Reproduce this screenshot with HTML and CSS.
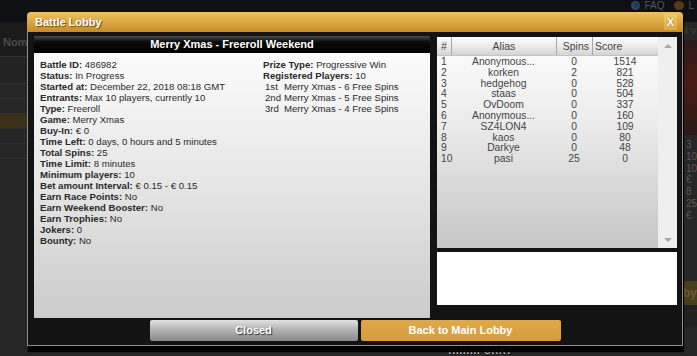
FILE: index.html
```html
<!DOCTYPE html>
<html lang="en">
     <head>
          <meta http-equiv="Content-type" content="text/html; charset=utf-8">
          <title>Battle Lobby</title>
          <link rel="stylesheet" href="styles.css">
     </head>
     <body>
          <div class="page">
               <div class="top-bar">
                    <span class="help-icon">?</span>
                    <span class="top-link">FAQ</span>
                    <span class="user-icon"></span>
                    <span class="top-link">L</span>
               </div>
               <div class="page-content">
                    <div class="left-col">
                         <div class="nav-bar">Nom</div>
                         <div class="list-head"></div>
                         <div class="list-row"></div>
                         <div class="list-row"></div>
                         <div class="list-row active"></div>
                         <div class="list-row"></div>
                         <div class="list-row"></div>
                    </div>
                    <div class="main-col">
                         <div class="footer-text">HIIIIIII CHAT</div>
                    </div>
                    <div class="right-col">
                         <div class="side-title">ll V</div>
                         <div class="promo"></div>
                         <div class="side-stats">
                              <div>3</div>
                              <div>10</div>
                              <div>10</div>
                              <div>€</div>
                              <div>8</div>
                              <div>25</div>
                              <div>€</div>
                         </div>
                         <div class="side-tab">by</div>
                         <div class="side-bar"></div>
                    </div>
               </div>
          </div>

          <div class="dialog">
               <div class="dialog-title">
                    <span class="title-text">Battle Lobby</span>
                    <span class="close-btn">X</span>
               </div>
               <div class="dialog-body">
                    <div class="panels">
                         <div class="info-panel">
                              <div class="panel-head">Merry Xmas - Freeroll Weekend</div>
                              <div class="panel-body">
                                   <div class="info">
                                        <div><b>Battle ID:</b> 486982</div>
                                        <div><b>Status:</b> In Progress</div>
                                        <div><b>Started at:</b> December 22, 2018 08:18 GMT</div>
                                        <div><b>Entrants:</b> Max 10 players, currently 10</div>
                                        <div><b>Type:</b> Freeroll</div>
                                        <div><b>Game:</b> Merry Xmas</div>
                                        <div><b>Buy-In:</b> € 0</div>
                                        <div><b>Time Left:</b> 0 days, 0 hours and 5 minutes</div>
                                        <div><b>Total Spins:</b> 25</div>
                                        <div><b>Time Limit:</b> 8 minutes</div>
                                        <div><b>Minimum players:</b> 10</div>
                                        <div><b>Bet amount Interval:</b> € 0.15 - € 0.15</div>
                                        <div><b>Earn Race Points:</b> No</div>
                                        <div><b>Earn Weekend Booster:</b> No</div>
                                        <div><b>Earn Trophies:</b> No</div>
                                        <div><b>Jokers:</b> 0</div>
                                        <div><b>Bounty:</b> No</div>
                                   </div>
                                   <div class="prizes">
                                        <div><b>Prize Type:</b> Progressive Win</div>
                                        <div><b>Registered Players:</b> 10</div>
                                        <div class="prize"><span class="place">1st</span>Merry Xmas - 6 Free Spins</div>
                                        <div class="prize"><span class="place">2nd</span>Merry Xmas - 5 Free Spins</div>
                                        <div class="prize"><span class="place">3rd</span>Merry Xmas - 4 Free Spins</div>
                                   </div>
                              </div>
                         </div>
                         <div class="side-panel">
                              <div class="standings">
                                   <div class="grid">
                                        <div class="grid-head">
                                             <div class="c-pos">#</div>
                                             <div class="c-alias">Alias</div>
                                             <div class="c-spins">Spins</div>
                                             <div class="c-score">Score</div>
                                        </div>
                                        <div class="grid-rows">
                                             <div class="grid-row"><div class="c-pos">1</div><div class="c-alias">Anonymous...</div><div class="c-spins">0</div><div class="c-score">1514</div></div>
                                             <div class="grid-row"><div class="c-pos">2</div><div class="c-alias">korken</div><div class="c-spins">2</div><div class="c-score">821</div></div>
                                             <div class="grid-row"><div class="c-pos">3</div><div class="c-alias">hedgehog</div><div class="c-spins">0</div><div class="c-score">528</div></div>
                                             <div class="grid-row"><div class="c-pos">4</div><div class="c-alias">staas</div><div class="c-spins">0</div><div class="c-score">504</div></div>
                                             <div class="grid-row"><div class="c-pos">5</div><div class="c-alias">OvDoom</div><div class="c-spins">0</div><div class="c-score">337</div></div>
                                             <div class="grid-row"><div class="c-pos">6</div><div class="c-alias">Anonymous...</div><div class="c-spins">0</div><div class="c-score">160</div></div>
                                             <div class="grid-row"><div class="c-pos">7</div><div class="c-alias">SZ4LON4</div><div class="c-spins">0</div><div class="c-score">109</div></div>
                                             <div class="grid-row"><div class="c-pos">8</div><div class="c-alias">kaos</div><div class="c-spins">0</div><div class="c-score">80</div></div>
                                             <div class="grid-row"><div class="c-pos">9</div><div class="c-alias">Darkye</div><div class="c-spins">0</div><div class="c-score">48</div></div>
                                             <div class="grid-row"><div class="c-pos">10</div><div class="c-alias">pasi</div><div class="c-spins">25</div><div class="c-score">0</div></div>
                                        </div>
                                   </div>
                                   <div class="scrollbar">
                                        <span class="arrow-up"></span>
                                        <span class="arrow-down"></span>
                                   </div>
                              </div>
                              <div class="chat-box"></div>
                         </div>
                    </div>
                    <div class="actions">
                         <div class="btn btn-closed">Closed</div>
                         <div class="btn btn-back">Back to Main Lobby</div>
                    </div>
               </div>
          </div>
     </body>
</html>
```

FILE: styles.css
```css
html{
     height: 100%;
}
body{
     margin: 0;
     padding: 0;
     height: 100%;
     overflow: hidden;
     background-color: #262626;
     font-family: "Liberation Sans", Arial, sans-serif;
}
b{
     font-weight: bold;
}

/* page behind the dialog */
.page{
     height: 356px;
     display: flex;
     flex-direction: column;
}
.top-bar{
     height: 22px;
     background-color: #0f1013;
     display: flex;
     justify-content: flex-end;
     align-items: flex-start;
     gap: 4px;
     padding-right: 3px;
     font-size: 10px;
     line-height: 11px;
     color: #4c5566;
}
.help-icon{
     width: 9px;
     height: 9px;
     border-radius: 50%;
     background-color: #2c4566;
     color: #0f1013;
     font-size: 8px;
     line-height: 9px;
     text-align: center;
     margin-top: 1px;
}
.user-icon{
     width: 10px;
     height: 9px;
     border-radius: 50%;
     background-color: #5a3a14;
     margin: 1px 0 0 6px;
}
.page-content{
     flex: 1;
     display: flex;
}
.left-col{
     width: 40px;
     display: flex;
     flex-direction: column;
}
.nav-bar{
     height: 34px;
     background-color: #1b1b1b;
     border-bottom: 1px solid #333;
     color: #4a4a4a;
     font-size: 11px;
     font-weight: bold;
     line-height: 40px;
     padding-left: 3px;
}
.list-head{
     height: 26px;
     background-color: #222;
     border-bottom: 1px solid #303030;
}
.list-row{
     height: 14px;
     border-bottom: 1px solid #2f2f2f;
}
.list-row.active{
     background-color: #3b3019;
}
.main-col{
     flex: 1;
     display: flex;
     flex-direction: column;
     justify-content: flex-end;
     align-items: center;
}
.footer-text{
     color: #bbb;
     font-size: 9px;
     line-height: 9px;
     font-weight: bold;
     margin: 0 0 0 260px;
     letter-spacing: 1px;
}
.right-col{
     width: 36px;
     display: flex;
     flex-direction: column;
     font-size: 10px;
     color: #5a5a5a;
}
.side-title{
     height: 18px;
     line-height: 18px;
     padding-left: 22px;
     color: #3c3c3c;
     font-weight: bold;
     font-size: 9px;
     white-space: nowrap;
}
.promo{
     height: 95px;
     background: linear-gradient(160deg, #241b1a, #4a1b15 50%, #2a1a18);
}
.side-stats{
     height: 140px;
     padding: 4px 0 0 25px;
     line-height: 11.8px;
}
.side-tab{
     height: 24px;
     margin-top: 2px;
     background-color: #4a3d1e;
     color: #6b5a33;
     font-weight: bold;
     font-size: 12px;
     line-height: 24px;
     padding-left: 22px;
}
.side-bar{
     height: 22px;
     background-color: #202020;
}

/* dialog */
.dialog{
     position: absolute;
     left: 27px;
     top: 12px;
     width: 656px;
     box-shadow: 1px 6px 1px rgba(0, 0, 0, 0.95);
}
.dialog-title{
     height: 20px;
     border-radius: 4px 4px 0 0;
     background: linear-gradient(#ebc45f, #d9a43e 55%, #c58c26);
     display: flex;
     justify-content: space-between;
     align-items: center;
     padding: 0 6px 0 8px;
}
.title-text{
     color: #fff;
     font-size: 11px;
     font-weight: bold;
     text-shadow: 1px 1px 1px #6a4a10;
}
.close-btn{
     width: 13px;
     height: 16px;
     background: linear-gradient(#f3cd6a, #dcaa45);
     color: #fff;
     font-size: 11px;
     font-weight: bold;
     text-align: center;
     line-height: 16px;
     text-shadow: 0 0 2px #8a6010;
}
.dialog-body{
     background-color: #131313;
     border: 1px solid #8c8c8c;
     border-top: none;
     padding: 4px 4px 4px 6px;
}
.panels{
     height: 282px;
     display: flex;
     gap: 7px;
}
.info-panel{
     width: 396px;
     display: flex;
     flex-direction: column;
}
.panel-head{
     height: 17px;
     line-height: 17px;
     background: linear-gradient(#4a4a4a, #0a0a0a 35%, #000);
     color: #fff;
     font-size: 11px;
     font-weight: bold;
     text-align: center;
}
.panel-body{
     flex: 1;
     background: linear-gradient(#fbfbfb, #e8e8e8 45%, #cbcbcb);
     display: flex;
     padding: 6px 6px 0 6px;
     font-size: 9.6px;
     line-height: 11px;
     color: #2a2a2a;
}
.info{
     width: 223px;
}
.prize{
     display: flex;
     padding-left: 2px;
}
.place{
     width: 19px;
}

/* standings */
.side-panel{
     width: 240px;
     padding-top: 1px;
     display: flex;
     flex-direction: column;
     gap: 4px;
}
.standings{
     height: 211px;
     display: flex;
     background: linear-gradient(#fefefe, #ececec 40%, #c6c6c6);
}
.grid{
     flex: 1;
}
.grid-head,
.grid-row{
     display: grid;
     grid-template-columns: 14px 105px 36px 66px;
}
.grid-head{
     height: 18px;
     line-height: 18px;
     background: linear-gradient(#fdfdfd, #ececec 50%, #d4d4d4);
     border-bottom: 1px solid #c4c4c4;
     font-size: 10.5px;
     color: #444;
}
.grid-head > div + div{
     border-left: 1px solid #a8a8a8;
}
.grid-rows{
     padding-top: 1px;
}
.grid-row{
     font-size: 10.3px;
     line-height: 10.8px;
     color: #444;
}
.c-pos{
     padding-left: 4px;
     white-space: nowrap;
}
.c-alias,
.c-spins,
.c-score{
     text-align: center;
}
.grid-head .c-score{
     text-align: left;
     padding-left: 2px;
}
.grid-head .c-spins{
     text-align: right;
     padding-right: 3px;
}
.scrollbar{
     width: 19px;
     background-color: #efefef;
     display: flex;
     flex-direction: column;
     justify-content: space-between;
     align-items: center;
     padding: 7px 0 6px 0;
}
.arrow-up,
.arrow-down{
     width: 0;
     height: 0;
     border-left: 4px solid transparent;
     border-right: 4px solid transparent;
}
.arrow-up{
     border-bottom: 4px solid #a9a9a9;
}
.arrow-down{
     border-top: 4px solid #a9a9a9;
}
.chat-box{
     height: 53px;
     background-color: #fff;
}

/* buttons */
.actions{
     display: flex;
     justify-content: center;
     gap: 3px;
     padding-top: 2px;
     margin-left: -2px;
}
.btn{
     height: 21px;
     line-height: 21px;
     color: #fff;
     font-size: 11px;
     font-weight: bold;
     text-align: center;
     border-radius: 2px;
}
.btn-closed{
     width: 208px;
     background: linear-gradient(#e2e2e2, #b4b4b4 45%, #888);
     text-shadow: 1px 1px 1px #333;
}
.btn-back{
     width: 200px;
     background: linear-gradient(#dfa84a, #d69c3c);
}
```
